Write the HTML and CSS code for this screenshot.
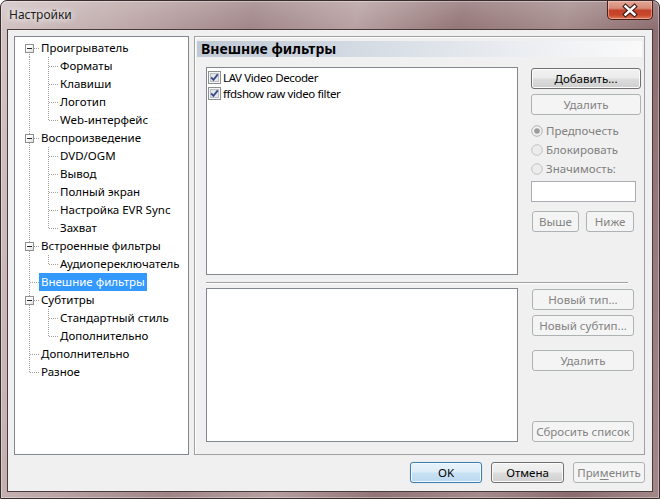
FILE: index.html
```html
<!DOCTYPE html>
<html lang="ru">
<head>
<meta charset="utf-8">
<title>Настройки</title>
<link rel="stylesheet" href="styles.css">
</head>
<body>
<div class="window">
  <div class="titlebar">
    <span class="title">Настройки</span>
    <div class="close">
      <svg width="44" height="17" viewBox="0 0 44 17">
        <path d="M17.5 4.5 L26.5 12.5 M26.5 4.5 L17.5 12.5" stroke="#3b1d18" stroke-width="4.6" stroke-linecap="square" fill="none"/>
        <path d="M17.5 4.5 L26.5 12.5 M26.5 4.5 L17.5 12.5" stroke="#ffffff" stroke-width="2.4" stroke-linecap="square" fill="none"/>
      </svg>
    </div>
  </div>
  <div class="client">
    <div class="main">
      <div class="tree">
        <div class="row"><span class="g g-first"><span class="box"></span></span><span class="lbl">Проигрыватель</span></div>
        <div class="row"><span class="g g-pipe"></span><span class="g g-tee"></span><span class="lbl">Форматы</span></div>
        <div class="row"><span class="g g-pipe"></span><span class="g g-tee"></span><span class="lbl">Клавиши</span></div>
        <div class="row"><span class="g g-pipe"></span><span class="g g-tee"></span><span class="lbl">Логотип</span></div>
        <div class="row"><span class="g g-pipe"></span><span class="g g-last"></span><span class="lbl">Web-интерфейс</span></div>
        <div class="row"><span class="g g-tee"><span class="box"></span></span><span class="lbl">Воспроизведение</span></div>
        <div class="row"><span class="g g-pipe"></span><span class="g g-tee"></span><span class="lbl">DVD/OGM</span></div>
        <div class="row"><span class="g g-pipe"></span><span class="g g-tee"></span><span class="lbl">Вывод</span></div>
        <div class="row"><span class="g g-pipe"></span><span class="g g-tee"></span><span class="lbl">Полный экран</span></div>
        <div class="row"><span class="g g-pipe"></span><span class="g g-tee"></span><span class="lbl">Настройка EVR Sync</span></div>
        <div class="row"><span class="g g-pipe"></span><span class="g g-last"></span><span class="lbl">Захват</span></div>
        <div class="row"><span class="g g-tee"><span class="box"></span></span><span class="lbl">Встроенные фильтры</span></div>
        <div class="row"><span class="g g-pipe"></span><span class="g g-last"></span><span class="lbl">Аудиопереключатель</span></div>
        <div class="row"><span class="g g-tee"></span><span class="lbl sel">Внешние фильтры</span></div>
        <div class="row"><span class="g g-tee"><span class="box"></span></span><span class="lbl">Субтитры</span></div>
        <div class="row"><span class="g g-pipe"></span><span class="g g-tee"></span><span class="lbl">Стандартный стиль</span></div>
        <div class="row"><span class="g g-pipe"></span><span class="g g-last"></span><span class="lbl">Дополнительно</span></div>
        <div class="row"><span class="g g-tee"></span><span class="lbl">Дополнительно</span></div>
        <div class="row"><span class="g g-last"></span><span class="lbl">Разное</span></div>
      </div>
      <div class="panel">
        <div class="header">Внешние фильтры</div>
        <div class="content">
          <div class="upper">
            <div class="list list-top">
              <div class="item">
                <svg class="cb" width="13" height="13" viewBox="0 0 13 13"><rect x="0.5" y="0.5" width="12" height="12" fill="#f6f6f6" stroke="#8e8f8f"/><rect x="2.5" y="2.5" width="8" height="8" fill="#e4e6ea" stroke="#b9bcc2"/><path d="M3.2 6.4 L5.4 8.8 L9.8 3.4" stroke="#3a4f8a" stroke-width="1.9" fill="none"/></svg>
                <span>LAV Video Decoder</span>
              </div>
              <div class="item">
                <svg class="cb" width="13" height="13" viewBox="0 0 13 13"><rect x="0.5" y="0.5" width="12" height="12" fill="#f6f6f6" stroke="#8e8f8f"/><rect x="2.5" y="2.5" width="8" height="8" fill="#e4e6ea" stroke="#b9bcc2"/><path d="M3.2 6.4 L5.4 8.8 L9.8 3.4" stroke="#3a4f8a" stroke-width="1.9" fill="none"/></svg>
                <span>ffdshow raw video filter</span>
              </div>
            </div>
            <div class="col">
              <button class="btn btn-wide">Добавить...</button>
              <button class="btn btn-wide btn-gap" disabled>Удалить</button>
              <div class="radio radio-first">
                <svg width="12" height="12" viewBox="0 0 12 12"><circle cx="6" cy="6" r="5.3" fill="#f0f0f0" stroke="#b4b4b4"/><circle cx="6" cy="6" r="2.8" fill="#9c9c9c"/></svg>
                <span>Предпочесть</span>
              </div>
              <div class="radio">
                <svg width="12" height="12" viewBox="0 0 12 12"><circle cx="6" cy="6" r="5.3" fill="#ececec" stroke="#c4c4c4"/></svg>
                <span>Блокировать</span>
              </div>
              <div class="radio">
                <svg width="12" height="12" viewBox="0 0 12 12"><circle cx="6" cy="6" r="5.3" fill="#ececec" stroke="#c4c4c4"/></svg>
                <span>Значимость:</span>
              </div>
              <div class="textbox"></div>
              <div class="pair">
                <button class="btn btn-up" disabled>Выше</button>
                <button class="btn btn-down" disabled>Ниже</button>
              </div>
            </div>
          </div>
          <div class="sep"></div>
          <div class="lower">
            <div class="list list-bottom"></div>
            <div class="col col-lower">
              <button class="btn btn-mid" disabled>Новый тип...</button>
              <button class="btn btn-mid btn-gap" disabled>Новый субтип...</button>
              <button class="btn btn-mid btn-gap-lg" disabled>Удалить</button>
              <button class="btn btn-mid btn-end" disabled>Сбросить список</button>
            </div>
          </div>
        </div>
      </div>
    </div>
    <div class="footer">
      <button class="btn btn-foot btn-default">OK</button>
      <button class="btn btn-foot btn-cancel">Отмена</button>
      <button class="btn btn-foot" disabled>При<u>м</u>енить</button>
    </div>
  </div>
</div>
</body>
</html>
```

FILE: styles.css
```css
html, body {
  margin: 0;
  padding: 0;
}

body {
  width: 660px;
  height: 499px;
  overflow: hidden;
  font-family: "Noto Sans", "Open Sans", sans-serif;
  font-size: 11.5px;
  color: #000;
}

.window {
  box-sizing: border-box;
  width: 660px;
  height: 499px;
  border: 1px solid #3a2b2c;
  border-radius: 7px 7px 0 0;
  padding: 0 6px 6px 6px;
  display: flex;
  flex-direction: column;
  background:
    linear-gradient(180deg, rgba(255,255,255,0.18) 0, rgba(255,255,255,0) 30px),
    linear-gradient(100deg, #d3c4c4 0%, #bca6a7 18%, #a08587 34%, #b7a0a1 48%, #927476 62%, #a58b8c 76%, #8c6d6f 88%, #a38889 100%);
  box-shadow: inset 0 0 0 1px rgba(255,255,255,0.35);
}

.titlebar {
  height: 28px;
  display: flex;
  align-items: flex-start;
  flex: none;
}

.title {
  margin-left: 2px;
  margin-top: 6px;
  font-size: 12px;
  line-height: 16px;
  color: #1b1b1b;
  text-shadow: 0 0 6px rgba(255,255,255,0.95), 0 0 10px rgba(255,255,255,0.7);
}

.close {
  margin-left: auto;
  box-sizing: border-box;
  width: 46px;
  height: 19px;
  border: 1px solid #4a1d16;
  border-top: none;
  border-radius: 0 0 5px 5px;
  background: linear-gradient(180deg, #e3a696 0%, #d78b78 40%, #c2412a 52%, #c8472b 78%, #de7a5c 100%);
  box-shadow: inset 0 0 0 1px rgba(255,220,210,0.45);
  display: flex;
  align-items: center;
  justify-content: center;
}

.close svg {
  display: block;
}

.client {
  flex: 1;
  border: 1px solid #4b3a3b;
  background: #f0f0f0;
  padding: 6px 7px 8px 6px;
  display: flex;
  flex-direction: column;
}

.main {
  height: 419px;
  display: flex;
  gap: 5px;
}

/* tree */
.tree {
  --v: repeating-linear-gradient(180deg, #a0a0a0 0 1px, transparent 1px 2px);
  --h: repeating-linear-gradient(90deg, #a0a0a0 0 1px, transparent 1px 2px);
  box-sizing: border-box;
  width: 175px;
  border: 1px solid #828790;
  background: #fff;
  padding: 2px 0 0 5px;
}

.row {
  display: flex;
  height: 18px;
  align-items: stretch;
}

.g {
  flex: none;
  width: 19px;
  height: 18px;
  display: flex;
  align-items: flex-start;
}

.g-first {
  background: var(--v) 9px 9px / 1px 9px no-repeat, var(--h) 10px 9px / 9px 1px no-repeat;
}

.g-tee {
  background: var(--v) 9px 0 / 1px 18px no-repeat, var(--h) 10px 9px / 9px 1px no-repeat;
}

.g-last {
  background: var(--v) 9px 0 / 1px 10px no-repeat, var(--h) 10px 9px / 9px 1px no-repeat;
}

.g-pipe {
  background: var(--v) 9px 0 / 1px 18px no-repeat;
}

.box {
  box-sizing: border-box;
  width: 9px;
  height: 9px;
  margin: 5px 0 0 5px;
  border: 1px solid #919191;
  background: linear-gradient(135deg, #ffffff 35%, #dcdcdc 100%);
  display: flex;
  align-items: center;
  justify-content: center;
}

.box::before {
  content: "";
  width: 5px;
  height: 1px;
  background: #262626;
}

.lbl {
  padding: 0 2px;
  line-height: 18px;
  white-space: nowrap;
}

.lbl.sel {
  background: #3399ff;
  color: #fff;
}

/* right panel */
.panel {
  box-sizing: border-box;
  width: 451px;
  border: 1px solid #a0a0a0;
  box-shadow: inset 1px 1px 0 #fff;
  display: flex;
  flex-direction: column;
}

.header {
  margin: 4px 2px 0 2px;
  height: 16px;
  padding-left: 4px;
  font-weight: 700;
  font-size: 14px;
  line-height: 16px;
  color: #000;
  background: linear-gradient(90deg, #c0c9d5 0%, #d0d7e0 30%, #e6eaef 65%, #fafafa 100%);
  white-space: nowrap;
}

.content {
  flex: 1;
  padding: 10px 2px 12px 11px;
  display: flex;
  flex-direction: column;
}

.upper {
  height: 208px;
  display: flex;
  gap: 13px;
}

.list {
  box-sizing: border-box;
  width: 312px;
  border: 1px solid #828790;
  background: #fff;
}

.list-top {
  padding: 1px 0 0 1px;
}

.item {
  display: flex;
  align-items: center;
  height: 16px;
  gap: 2px;
  white-space: nowrap;
  letter-spacing: -0.4px;
}

.cb {
  flex: none;
  display: block;
}

.col {
  width: 110px;
  display: flex;
  flex-direction: column;
  align-items: flex-start;
}

.btn {
  box-sizing: border-box;
  height: 21px;
  padding: 0;
  margin: 0;
  font-family: inherit;
  font-size: 11.5px;
  line-height: 19px;
  color: #000;
  border: 1px solid #707070;
  border-radius: 3px;
  background: linear-gradient(180deg, #f2f2f2 0%, #ebebeb 49%, #dddddd 51%, #cfcfcf 100%);
  box-shadow: inset 0 0 0 1px #fbfbfb;
  text-align: center;
  white-space: nowrap;
}

.btn:disabled {
  color: #838383;
  border-color: #adb2b5;
  background: #f4f4f4;
  box-shadow: none;
}

.btn u {
  text-decoration: underline;
  text-underline-offset: 2px;
}

.btn-wide {
  width: 110px;
  margin-top: 1px;
}

.btn-gap {
  margin-top: 5px;
}

.radio {
  height: 19px;
  display: flex;
  align-items: center;
  gap: 3px;
  color: #808080;
  white-space: nowrap;
}

.radio svg {
  display: block;
  flex: none;
}

.radio-first {
  margin-top: 6px;
}

.textbox {
  box-sizing: border-box;
  width: 105px;
  height: 21px;
  margin-top: 3px;
  border: 1px solid #abadb3;
  background: #fff;
}

.pair {
  margin-top: 9px;
  display: flex;
  gap: 7px;
  padding-left: 1px;
}

.btn-up {
  width: 47px;
}

.btn-down {
  width: 48px;
}

.sep {
  width: 422px;
  height: 0;
  margin: 7px 0 4px 0;
  border-top: 1px solid #a0a0a0;
  border-bottom: 1px solid #fff;
}

.lower {
  flex: 1;
  display: flex;
  gap: 13px;
}

.col-lower {
  padding-left: 1px;
  box-sizing: border-box;
}

.btn-mid {
  width: 102px;
}

.col-lower .btn-mid:first-child {
  margin-top: 1px;
}

.btn-gap-lg {
  margin-top: 14px;
}

.btn-end {
  margin-top: auto;
}

/* footer */
.footer {
  margin-top: 7px;
  height: 21px;
  display: flex;
  justify-content: flex-end;
  gap: 9px;
}

.btn-foot {
  width: 72px;
}

.btn-cancel {
  width: 73px;
}

.btn-default {
  border-color: #3c7fb1;
  background: linear-gradient(180deg, #e8f3fb 0%, #dcecf8 49%, #c8e1f4 51%, #bcd9f0 100%);
  box-shadow: inset 0 0 0 1px #f2f8fd, 0 0 1px rgba(60,127,177,0.4);
}
```
